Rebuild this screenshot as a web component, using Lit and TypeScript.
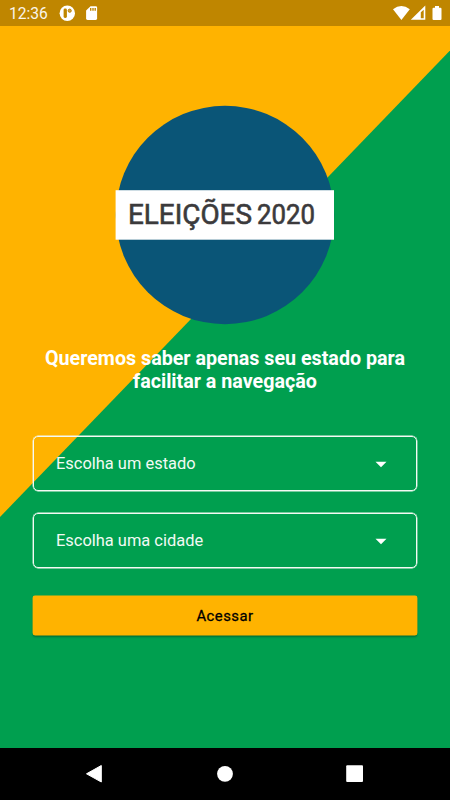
import { LitElement, html, css, svg } from "lit";
import { customElement, property } from "lit/decorators.js";

@customElement("status-bar")
class StatusBar extends LitElement {
  static styles = css`
    :host { display: flex; align-items: center; height: 26px; background: #bf8600; color: #fff; font: 15.6px Roboto, sans-serif; }
    .time { box-sizing: border-box; width: 51px; height: 26px; padding: 1px 0 0 9px; line-height: 26px; opacity: .92; }
    .left { width: 60px; height: 26px; }
    .right { width: 60px; height: 26px; margin-left: auto; }
    svg { display: block; }
  `;
  render() {
    return html`
      <span class="time">12:36</span>
      <svg class="left" viewBox="51 0 60 26" fill="#fff">
        <circle cx="67.3" cy="13.3" r="7.7" />
        <rect x="63.600" y="8.600" width="3.300" height="9.300" rx="1.400" fill="#bf8600" />
        <circle cx="69.700" cy="10.700" r="1.600" fill="#cda04a" stroke="#bf8600" stroke-width="1" />
        <path d="M90.5 6.2h5.200q1.400 0 1.400 1.400v11q0 1.400-1.400 1.400h-8.200q-1.400 0-1.400-1.400v-8z" />
        <path d="M90 8h1.400v2.800H90zM92.300 8h1.400v2.800h-1.400zM94.500 8h1.400v2.800h-1.400z" fill="#bf8600" />
      </svg>
      <svg class="right" viewBox="390 0 60 26" fill="#fff">
        <path d="M393 9.200Q401.300 2.800 409.800 9.200L401.400 20z" />
        <path fill-rule="evenodd" d="M425.300 5.500v14.200h-14.500zM420.800 12.300v5.900h2.900V9.700z" />
        <path d="M435 6h4v1.700h1.400q1.100 0 1.100 1.100v10.100q0 1.100-1.100 1.100h-6.800q-1.100 0-1.100-1.100V8.800q0-1.100 1.100-1.100H435z" />
      </svg>`;
  }
}

@customElement("election-logo")
class ElectionLogo extends LitElement {
  static styles = css`
    :host { display: block; width: 220px; height: 220px; }
    svg { display: block; }
    .name { font-family: Roboto, sans-serif; font-size: 27px; font-weight: 400; fill: #3b3a3c; stroke: #3b3a3c; stroke-width: .6px; }
  `;
  render() {
    return html`<svg width="220" height="220" viewBox="115 105 220 220">
      <circle cx="225" cy="215" r="109.2" fill="#0a5577" />
      <rect x="115.6" y="190.2" width="218.4" height="49.5" fill="#fff" />
      ${svg`<text class="name" x="128" y="223.7" textLength="124" lengthAdjust="spacingAndGlyphs">ELEIÇÕES</text>
      <text class="name" x="257" y="223.7" textLength="58" lengthAdjust="spacingAndGlyphs">2020</text>`}
    </svg>`;
  }
}

@customElement("select-field")
class SelectField extends LitElement {
  @property() label = "";
  static styles = css`
    :host { display: flex; align-items: center; justify-content: space-between; box-sizing: border-box; width: 384px; height: 55px; padding: 0 29px 0 22px; border: 1px solid #f4faf4; box-shadow: 0 0 0 .4px #f4faf4; border-radius: 5px; color: #f2faf4; font: 16.45px/20px Roboto, sans-serif; }
    svg { display: block; margin-top: 1px; }
  `;
  render() {
    return html`<span>${this.label}</span>
      <svg width="12" height="7" viewBox="0 0 12 7"><path d="M.5.700h11L6 6.300z" fill="#fff" /></svg>`;
  }
}

@customElement("nav-bar")
class NavBar extends LitElement {
  static styles = css`
    :host { display: block; height: 52px; background: #000; }
    svg { display: block; }
  `;
  render() {
    return html`<svg width="450" height="52" viewBox="0 748 450 52" fill="#fff">
      <path d="M86.500 773.800L101.300 765.500V782z" stroke="#fff" stroke-width="1" stroke-linejoin="round" />
      <circle cx="225" cy="773.800" r="7.900" />
      <rect x="346.200" y="765.300" width="16.800" height="16.700" rx="1" />
    </svg>`;
  }
}

@customElement("app-root")
class AppRoot extends LitElement {
  static styles = css`
    :host { display: flex; flex-direction: column; width: 450px; height: 800px; overflow: hidden; font-family: Roboto, sans-serif; }
    main { flex: 1; display: flex; flex-direction: column; align-items: center; box-sizing: border-box; padding: 79px 33px 0; background: #009f4f; position: relative; }
    .flag { position: absolute; inset: 0; width: 450px; height: 722px; }
    election-logo, h1, .form { position: relative; }
    h1 { margin: 22px 0 0; color: #fff; font-size: 19.7px; line-height: 23px; font-weight: 700; text-align: center; white-space: nowrap; }
    .form { width: 384px; margin-top: 43px; display: flex; flex-direction: column; gap: 22px; }
    button { width: 384px; height: 39px; margin-top: 6px; padding: 0; border: 0; border-radius: 2px; background: #ffb300; color: #000; font: 400 14.8px Roboto, sans-serif; letter-spacing: .5px; -webkit-text-stroke: .3px #000; box-shadow: 0 0 0 .4px #ffb300, 0 2px 2px rgba(0, 0, 0, .3); }
  `;
  render() {
    return html`
      <status-bar></status-bar>
      <main>
        <svg class="flag" viewBox="0 26 450 722"><path d="M0 26H450V50.500L0 517z" fill="#ffb300" /></svg>
        <election-logo></election-logo>
        <h1>Queremos saber apenas seu estado para<br />facilitar a navegação</h1>
        <div class="form">
          <select-field label="Escolha um estado"></select-field>
          <select-field label="Escolha uma cidade"></select-field>
          <button>Acessar</button>
        </div>
      </main>
      <nav-bar></nav-bar>`;
  }
}
